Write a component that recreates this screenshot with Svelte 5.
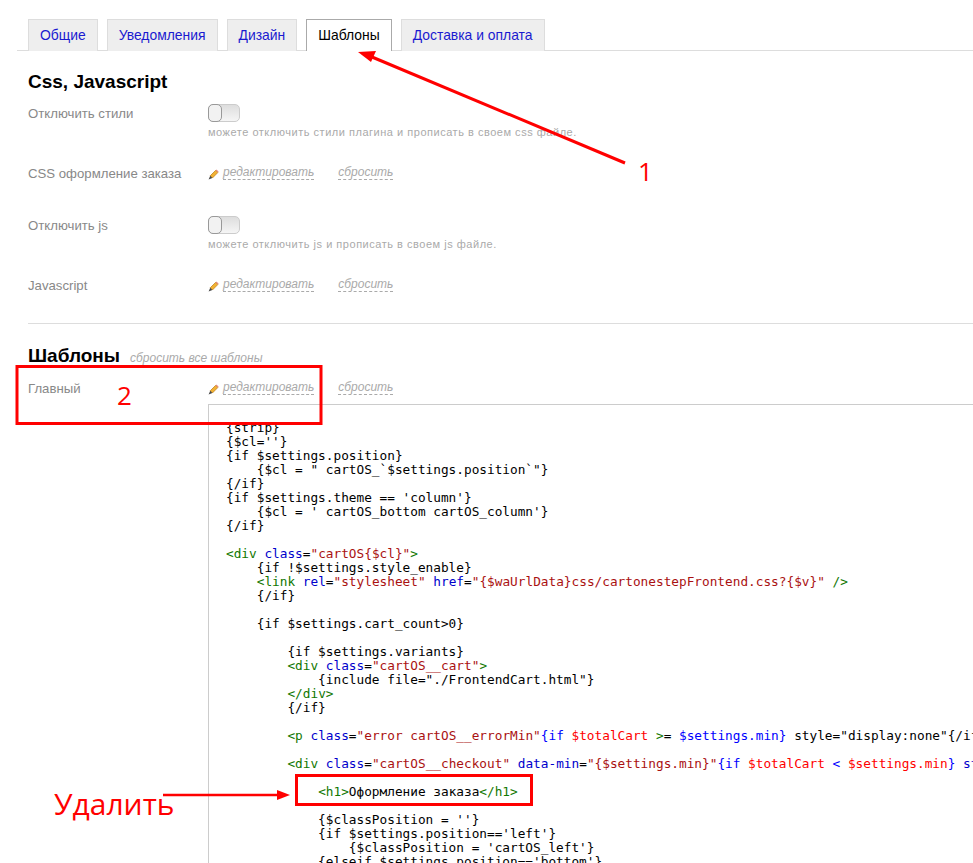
<script>
  const tabs = [
    { name: 'Общие' },
    { name: 'Уведомления' },
    { name: 'Дизайн' },
    { name: 'Шаблоны', active: true },
    { name: 'Доставка и оплата' }
  ];

  const source = [
    '{strip}',
    "{$cl=''}",
    '{if $settings.position}',
    '    {$cl = " cartOS_`$settings.position`"}',
    '{/if}',
    "{if $settings.theme == 'column'}",
    "    {$cl = ' cartOS_bottom cartOS_column'}",
    '{/if}',
    '',
    '§t|<div§ §a|class§=§s|"cartOS{$cl}"§§t|>§',
    '    {if !$settings.style_enable}',
    '    §t|<link§ §a|rel§=§s|"stylesheet"§ §a|href§=§s|"{$waUrlData}css/cartonestepFrontend.css?{$v}"§ §t|/>§',
    '    {/if}',
    '',
    '    {if $settings.cart_count>0}',
    '',
    '        {if $settings.variants}',
    '        §t|<div§ §a|class§=§s|"cartOS__cart"§§t|>§',
    '            {include file="./FrontendCart.html"}',
    '        §t|</div>§',
    '        {/if}',
    '',
    '        §t|<p§ §a|class§=§s|"error cartOS__errorMin"§§b|{if§ §v|$totalCart§ §t|>§= §b|$settings.min}§ style="display:none"{/if}§t|>§',
    '',
    '        §t|<div§ §a|class§=§s|"cartOS__checkout"§ §a|data-min§=§s|"{$settings.min}"§§b|{if§ §v|$totalCart§ §b|<§ §v|$settings.min§§b|}§ §a|style§=§s|"display:none"§§b|{/if}§§t|>§',
    '',
    '            §t|<h1>§Оформление заказа§t|</h1>§',
    '',
    "            {$classPosition = ''}",
    "            {if $settings.position=='left'}",
    "                {$classPosition = 'cartOS_left'}",
    "            {elseif $settings.position=='bottom'}"
  ];

  const parse = (line) =>
    line.split('§').reduce((parts, chunk, i) => {
      if (i % 2 === 0) {
        if (chunk) parts.push({ c: 'x', text: chunk });
      } else {
        parts.push({ c: chunk[0], text: chunk.slice(2) });
      }
      return parts;
    }, []);

  const lines = source.map(parse);
</script>

{#snippet edit()}
  <div class="actions">
    <svg class="pencil" width="11" height="11" viewBox="0 0 11 11" aria-hidden="true">
      <path d="M2.200 6.800 L7.600 1.400 L9.800 3.600 L4.400 9 Z" fill="#f2b233" stroke="#b9770e" stroke-width="0.7" />
      <path d="M7.600 1.400 L8.500 0.500 L10.700 2.700 L9.800 3.600 Z" fill="#e58a7c" />
      <path d="M2.200 6.800 L0.600 10.600 L4.400 9 Z" fill="#4a4a4a" />
    </svg>
    <span class="dash edit">редактировать</span>
    <span class="dash reset">сбросить</span>
  </div>
{/snippet}

{#snippet toggle()}
  <div class="toggle"><div class="knob"></div></div>
{/snippet}

<div class="page">
  <ul class="tabs">
    {#each tabs as tab}
      <li class="tab" class:active={tab.active}>{tab.name}</li>
    {/each}
  </ul>

  <div class="content">
    <h2 class="first">Css, Javascript</h2>

    <div class="row tall">
      <div class="label">Отключить стили</div>
      <div class="value">
        {@render toggle()}
        <div class="hint">можете отключить стили плагина и прописать в своем css файле.</div>
      </div>
    </div>
    <div class="row short">
      <div class="label">CSS оформление заказа</div>
      <div class="value">{@render edit()}</div>
    </div>
    <div class="row tall">
      <div class="label">Отключить js</div>
      <div class="value">
        {@render toggle()}
        <div class="hint">можете отключить js и прописать в своем js файле.</div>
      </div>
    </div>
    <div class="row">
      <div class="label">Javascript</div>
      <div class="value">{@render edit()}</div>
    </div>

    <hr />

    <h2 class="second">Шаблоны <span class="dash all">сбросить все шаблоны</span></h2>

    <div class="row">
      <div class="label">Главный</div>
      <div class="value grow">
        {@render edit()}
        <div class="editor">
          {#each lines as line}
            <div class="line">{#each line as part}<span class={part.c}>{part.text}</span>{/each}</div>
          {/each}
        </div>
      </div>
    </div>
  </div>

  <svg class="marks" width="973" height="863" viewBox="0 0 973 863" aria-hidden="true">
    <g fill="none" stroke="#ff0000" stroke-width="3">
      <path d="M625 163 L372 57" />
      <rect x="17" y="366.500" width="304" height="57" />
      <rect x="296.500" y="775.500" width="235" height="29" />
      <path d="M163 795 L278 795" stroke-width="2.500" />
    </g>
    <path d="M358 52 L376 51 L371 62 Z" fill="#ff0000" />
    <path d="M290 795 L277 790 L277 800 Z" fill="#ff0000" />
  </svg>
  <div class="note one">1</div>
  <div class="note two">2</div>
  <div class="note del">Удалить</div>
</div>

<style>
  :global(body) {
    margin: 0;
    background: #fff;
  }
  .page {
    position: relative;
    width: 973px;
    height: 863px;
    overflow: hidden;
    font-family: "Liberation Sans", Arial, sans-serif;
    color: #000;
  }
  .tabs {
    list-style: none;
    margin: 0 0 0 17px;
    padding: 19px 0 0 11px;
    height: 31px;
    display: flex;
    gap: 9px;
    border-bottom: 1px solid #ddd;
  }
  .tab {
    box-sizing: border-box;
    height: 32px;
    padding: 7px 11px 0;
    font-size: 13.900px;
    line-height: 16px;
    color: #1a1ad0;
    background: #eee;
    border: 1px solid #ddd;
    border-bottom: 0;
  }
  .tab.active {
    color: #000;
    background: #fff;
    border-color: #aaa;
  }
  .content {
    padding-left: 28px;
  }
  h2 {
    margin: 0;
    font-size: 19px;
    line-height: 22px;
    font-weight: 700;
  }
  h2.first {
    padding-top: 20px;
    margin-bottom: 12px;
  }
  h2.second {
    margin-top: 21px;
    margin-bottom: 13px;
    display: flex;
    align-items: baseline;
    gap: 10px;
  }
  .row {
    display: flex;
  }
  .row.tall {
    height: 60px;
  }
  .row.short {
    height: 52px;
  }
  .label {
    width: 180px;
    flex: none;
    padding-top: 1px;
    font-size: 13.200px;
    line-height: 16px;
    color: #888;
  }
  .value.grow {
    flex: 1;
    min-width: 0;
  }
  .toggle {
    box-sizing: border-box;
    width: 32px;
    height: 18px;
    border: 1px solid #ccc;
    border-radius: 5px;
    background: linear-gradient(#ddd, #f5f5f5);
    margin-top: -1px;
    position: relative;
  }
  .knob {
    position: absolute;
    left: -1px;
    top: -1px;
    box-sizing: border-box;
    width: 14px;
    height: 18px;
    border: 1px solid #999;
    border-radius: 5px;
    background: #f2f2f2;
  }
  .hint {
    margin-top: 3px;
    font-size: 11px;
    line-height: 15px;
    letter-spacing: 0.52px;
    color: #aaa;
    white-space: nowrap;
  }
  .actions {
    display: flex;
    align-items: flex-start;
    height: 18px;
    white-space: nowrap;
  }
  .pencil {
    margin: 4px 4px 0 0;
    flex: none;
  }
  .dash {
    font-style: italic;
    font-size: 12px;
    line-height: 14px;
    color: #aaa;
    border-bottom: 1px dashed #aaa;
    font-weight: 400;
  }
  .edit {
    margin-right: 24px;
  }
  hr {
    border: 0;
    border-top: 1px solid #ddd;
    margin: 28px 0 0;
  }
  .editor {
    box-sizing: border-box;
    margin-top: 6px;
    height: 700px;
    padding: 16px 0 0 17px;
    border: 1px solid #ccc;
    border-right: 0;
    font-family: "DejaVu Sans Mono", "Liberation Mono", monospace;
    font-size: 12.750px;
    line-height: 14px;
    white-space: pre;
    overflow: hidden;
  }
  .line {
    height: 14px;
  }
  .x { color: #000; }
  .t { color: #117700; }
  .a { color: #0000cc; }
  .s { color: #aa1111; }
  .b { color: #0000ff; }
  .v { color: #ff0000; }
  .marks {
    position: absolute;
    left: 0;
    top: 0;
  }
  .note {
    position: absolute;
    font-family: "Open Sans", "Noto Sans", sans-serif;
    color: #f00;
    line-height: 1;
    white-space: nowrap;
  }
  .one { left: 638px; top: 158px; font-size: 26px; }
  .two { left: 117px; top: 382px; font-size: 26px; }
  .del { left: 54px; top: 789px; font-size: 30px; }
</style>
